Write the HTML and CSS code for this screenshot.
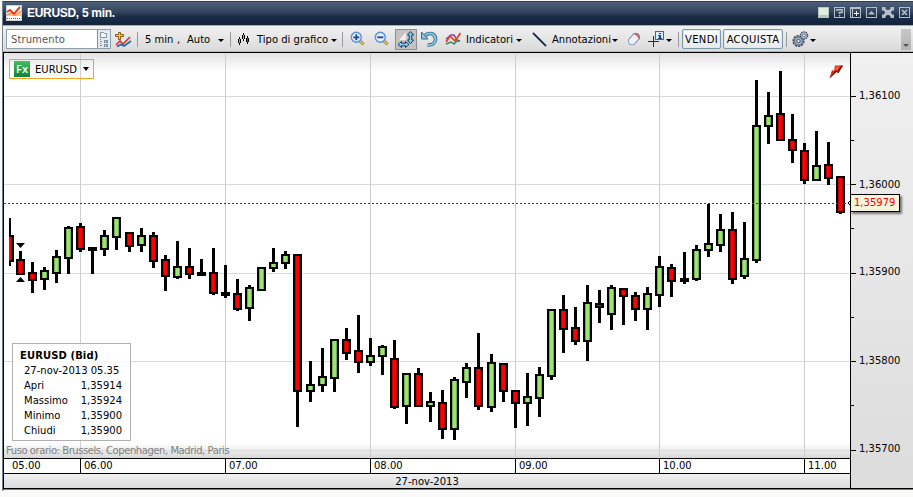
FILE: index.html
```
<!DOCTYPE html>
<html lang="it">
<head>
  <meta charset="utf-8">
  <title>EURUSD, 5 min.</title>
  <link rel="stylesheet" href="styles.css">
</head>
<body>
  <div class="window">
    <div class="titlebar">
      <svg class="logo" width="16" height="16" viewBox="0 0 16 16">
        <rect x="0.5" y="0.5" width="15" height="15" fill="#fff" stroke="#ccc"/>
        <path d="M1 9l4-2 4 3 6-5v6H1z" fill="#f5c29a"/>
        <path d="M1 7l3-2 4 4 6-7" fill="none" stroke="#e23b17" stroke-width="2"/>
        <path d="M1 10l4-2 4 3 6-5" fill="none" stroke="#f08a3c"/>
        <path d="M1 13.5h14" stroke="#555" stroke-dasharray="1 1"/>
      </svg>
      <span class="title">EURUSD, 5 min.</span>
      <div class="controls">
        <svg width="11" height="11"><rect width="11" height="11" fill="#b9c6c0"/><rect x="1" y="1" width="9" height="7" fill="#e3eedc"/></svg>
        <svg width="11" height="11" fill="none" stroke="#b5bfca"><rect x=".5" y=".5" width="10" height="10"/><path d="M3 4V2.800h5v2.700H5.500V7M5.500 8v1.500" stroke-width="1.500"/></svg>
        <svg width="11" height="11" fill="none" stroke="#b5bfca"><rect x=".5" y=".5" width="10" height="10"/><path d="M1 1.500h9M2.500 1v9"/><path d="M4 6.500h5M6.500 4v5" stroke="#fff"/></svg>
        <svg width="11" height="11" fill="none" stroke="#b5bfca"><rect x=".5" y=".5" width="10" height="10"/><path d="M2 7.500h7L5.500 4z" fill="#b5bfca" stroke="none"/></svg>
        <svg width="12" height="11" fill="#b5bfca"><path d="M0 0h4L3 1l2 2 2 0 2-2-1-1h4v4l-1-1-2 2v1l2 2 1-1v4H8l1-1-2-2H5l-2 2 1 1H0V7l1 1 2-2V5L1 3 0 4z"/></svg>
        <svg width="11" height="11" fill="none" stroke="#b5bfca"><rect x=".5" y=".5" width="10" height="10"/><path d="M3 3l5 5M8 3L3 8" stroke-width="1.700"/></svg>
      </div>
    </div>

    <div class="toolbar">
      <div class="search">
        <span class="search-text">Strumento</span>
        <svg class="search-btn" width="12" height="18">
          <path d="M2.500 2.500h3l1 1h2v4h-6z" fill="#f4f7f9" stroke="#7f93a3"/>
          <path d="M2.500 9v7M3 11.500h2M3 15.500h2" stroke="#7f93a3" stroke-dasharray="1 1" fill="none"/>
          <path d="M6 10h4v3H6zM6 14h4v3H6z" fill="#7f93a3"/>
          <path d="M7 11h1v1H7zM7 15h1v1H7z" fill="#fff"/>
        </svg>
      </div>
      <svg class="i-add" width="17" height="17">
        <path d="M1 14l4-4 3 3 7-7" fill="none" stroke="#d3352b" stroke-width="1.600"/>
        <path d="M2 15.500l4-2 3 1.500 7-5" fill="none" stroke="#2464b4" stroke-width="1.700"/>
        <path d="M3.500 1.500h2v2h3v2h-3v3h-2v-3h-3v-2h3z" fill="#f4c765" stroke="#8c5a14"/>
      </svg>
      <i class="sep s1"></i>
      <span class="label t-period">5 min</span>
      <span class="label t-comma">,</span>
      <span class="label t-auto">Auto</span>
      <i class="arrow"></i>
      <i class="sep s2"></i>
      <svg class="i-candles" width="12" height="13" shape-rendering="crispEdges">
        <path d="M1.500 4v8M5.500 0v8M9.500 3v8" stroke="#000"/>
        <path d="M0 6h3v4H0zM4 2h3v4H4zM8 5h3v4H8z"/>
        <path d="M1 6h1v4H1zM5 2h1v4H5z" fill="#3be03b"/><path d="M9 5h1v4H9z" fill="#f00"/>
      </svg>
      <span class="label t-type">Tipo di grafico</span>
      <i class="arrow"></i>
      <i class="sep s3"></i>
      <svg class="i-zoomin" width="16" height="16">
        <path d="M9.500 9.500l4 4" stroke="#8d6a25" stroke-width="3"/><path d="M10 10l3.500 3.500" stroke="#f1c96c" stroke-width="1.500"/>
        <circle cx="6.300" cy="6.300" r="5" fill="#e1eefc" stroke="#5a8fd8" stroke-width="1.400"/>
        <path d="M3.300 6.300h6M6.300 3.300v6" stroke="#1b4693" stroke-width="1.800"/>
      </svg>
      <svg class="i-zoomout" width="16" height="16">
        <path d="M9.500 9.500l4 4" stroke="#8d6a25" stroke-width="3"/><path d="M10 10l3.500 3.500" stroke="#f1c96c" stroke-width="1.500"/>
        <circle cx="6.300" cy="6.300" r="5" fill="#e1eefc" stroke="#5a8fd8" stroke-width="1.400"/>
        <path d="M3.300 6.300h6" stroke="#1b4693" stroke-width="1.800"/>
      </svg>
      <svg class="i-scale" width="22" height="21">
        <rect x=".5" y=".5" width="21" height="20" fill="#c3c3c3" stroke="#8e8e8e"/>
        <path d="M4 11L11 3v8z" fill="#eee"/>
        <path d="M15.500 2.500l3 3.500h-1.700v5h1.700l-3 3.500-3-3.500h1.700V6h-1.700z" fill="#8fd0f0" stroke="#12395e"/>
        <path d="M3 15.500l3.500-3v1.700h4v-1.700l3.500 3-3.500 3v-1.700h-4v1.700z" fill="#8fd0f0" stroke="#12395e"/>
      </svg>
      <svg class="i-undo" width="17" height="16">
        <path d="M4 4.500c5-4 10-1.500 10.500 3s-3.500 7-8 6.500" fill="none" stroke="#356e92" stroke-width="3.600"/>
        <path d="M4 4.500c5-4 10-1.500 10.500 3s-3.500 7-8 6.500" fill="none" stroke="#8fc6e2" stroke-width="1.800"/>
        <path d="M.5 1v7H7z" fill="#8fc6e2" stroke="#356e92"/>
      </svg>
      <svg class="i-ind" width="17" height="14" fill="none">
        <path d="M1 7l5-4h3l3 5 3 1" stroke="#7b46a8" stroke-width="1.500"/>
        <path d="M1 12l5-2 3 2 3-3 3 0" stroke="#2f8c5d" stroke-width="1.500"/>
        <path d="M1 10l4-6 5 5 5.500-8" stroke="#ee3a1b" stroke-width="1.700"/>
      </svg>
      <span class="label t-ind">Indicatori</span>
      <i class="arrow"></i>
      <svg class="i-line" width="15" height="15"><path d="M1 1l13 13" stroke="#8aa1c4" stroke-width="2.400"/><path d="M1 1l13 13" stroke="#0c1a38" stroke-width="1.400"/></svg>
      <span class="label t-ann">Annotazioni</span>
      <i class="arrow"></i>
      <svg class="i-eraser" width="14" height="14">
        <g transform="rotate(-48 7 7)">
          <rect x="0.500" y="3.300" width="13" height="7.400" rx="3.700" fill="#eef0f8" stroke="#8090b4"/>
          <path d="M11 3.800a3.700 3.700 0 0 1 0 6.400q1.200-3.200 0-6.400z" fill="#e79a92" stroke="#c05a52"/>
        </g>
      </svg>
      <svg class="i-info" width="17" height="16">
        <path d="M0 10.500h11M5.500 5v11" stroke="#1b2f55" shape-rendering="crispEdges"/>
        <rect x="7.500" y=".5" width="8" height="8" fill="#d8ebfa" stroke="#2470b0"/>
        <path d="M11 2h2v1h-2zM10 4h3v3h1v1h-4V7h1V5h-1z" fill="#154a86"/>
      </svg>
      <i class="arrow"></i>
      <i class="sep s4"></i>
      <button class="order sell">VENDI</button>
      <button class="order buy">ACQUISTA</button>
      <i class="sep s5"></i>
      <svg class="i-gear" width="17" height="17">
        <circle cx="6.500" cy="10" r="5.300" fill="#8f9eb2" stroke="#46546a" stroke-width="1.600" stroke-dasharray="2.200 1"/>
        <circle cx="6.500" cy="10" r="4" fill="#a9b7c8" stroke="#617087"/>
        <circle cx="6.500" cy="10" r="1.700" fill="#e8edf2" stroke="#3f4d63"/>
        <circle cx="12" cy="4.500" r="3.500" fill="#c0cbd8" stroke="#46546a" stroke-width="1.600" stroke-dasharray="1.500 .7"/>
        <circle cx="12" cy="4.500" r="1.400" fill="#f2f4f7" stroke="#4e5d72" stroke-width=".8"/>
      </svg>
      <i class="arrow"></i>
      <div class="overflow"><i class="arrow"></i></div>
    </div>

    <div class="chart">
      <div class="left">
        <div class="plot">
          <svg id="plot" width="846" height="405" viewBox="4 53 846 405"></svg>
          <div class="symbol"><b class="fx">Fx</b><span>EURUSD</span><i></i></div>
          <svg class="bolt" width="15" height="14"><path d="M6 .5h8L9.500 8 7.500 7 .5 13.500 3 5l2 1z" fill="#e02a10"/><path d="M14 .5L9.500 8 7.500 7 .5 13.500 4.500 8l2-2.500 2 1L12 .5z" fill="#7a1308"/><path d="M7 1.500h4L8 5.500 6 4.800z" fill="#ff5a2a"/></svg>
          <div class="legend">
            <b>EURUSD (Bid)</b>
            <div>27-nov-2013 05.35</div>
            <div><span>Apri</span><span>1,35914</span></div>
            <div><span>Massimo</span><span>1,35924</span></div>
            <div><span>Minimo</span><span>1,35900</span></div>
            <div><span>Chiudi</span><span>1,35900</span></div>
          </div>
          <div class="tz">Fuso orario: Brussels, Copenhagen, Madrid, Paris</div>
        </div>
        <div class="hours">
          <span>05.00</span><span>06.00</span><span>07.00</span><span>08.00</span><span>09.00</span><span>10.00</span><span>11.00</span>
        </div>
        <div class="date">27-nov-2013</div>
      </div>
      <div class="axis">
        <svg id="axis" width="62" height="435" viewBox="851 53 62 435"></svg>
        <div class="price">1,35979</div>
      </div>
    </div>
  </div>
  <script src="chart.js"></script>
</body>
</html>
```
FILE: styles.css
```
body {
  margin: 0;
  background: #f9faf8;
  font-family: "DejaVu Sans", Verdana, sans-serif;
  font-size: 10px;
  color: #000;
  overflow: hidden;
}

svg {
  display: block;
  flex: none;
}

.window {
  box-sizing: border-box;
  width: 911px;
  height: 490px;
  margin: 1px 0 0 2px;
  border-left: 1px solid #70808f;
}

/* title bar */
.titlebar {
  box-sizing: border-box;
  display: flex;
  align-items: center;
  height: 24px;
  padding: 0 4px 0 4px;
  border-top: 1px solid #2c3d57;
  border-bottom: 1px solid #16253a;
  background: linear-gradient(#4f607a, #33445f 45%, #1c2d48 65%, #13243c);
}

.logo {
  margin-left: -1px;
}

.title {
  margin-left: 5px;
  font: bold 12px "Liberation Sans", Arial, sans-serif;
  letter-spacing: -.3px;
  color: #fff;
}

.controls {
  display: flex;
  gap: 5px;
  margin: -1px -1px 0 auto;
}

/* toolbar */
.toolbar {
  box-sizing: border-box;
  display: flex;
  align-items: center;
  height: 27px;
  padding: 1px 2px 0 3px;
  border-top: 1px solid #a9adb3;
  border-bottom: 1px solid #b5b5b5;
  background: linear-gradient(#f1f1f1, #dadada);
}

.toolbar > * {
  flex: none;
}

.search {
  box-sizing: border-box;
  display: flex;
  width: 105px;
  height: 20px;
  border: 1px solid #8fa0ad;
  background: #fff;
}

.search-text {
  width: 90px;
  padding-left: 4px;
  box-sizing: border-box;
  line-height: 20px;
  letter-spacing: .1px;
  color: #555;
}

.search-btn {
  background: #e3eaf0;
  border-left: 1px solid #7795a8;
}

.label {
  margin-top: 1px;
  white-space: nowrap;
  line-height: 14px;
}

.sep {
  width: 1px;
  height: 15px;
  background: #9a9a9a;
}

.arrow {
  width: 0;
  height: 0;
  margin-top: 3px;
  border: 3px solid transparent;
  border-top-color: #000;
  border-bottom: 0;
}

.i-add { margin-left: 4px; }
.s1 { margin-left: 5px; }
.t-period { width: 32px; margin-left: 7px; }
.t-comma { width: 10px; }
.t-auto { width: 31px; }
.s2 { margin-left: 6px; }
.i-candles { margin-left: 7px; }
.t-type { width: 74px; margin-left: 7px; }
.s3 { margin-left: 5px; }
.i-zoomin { margin-left: 7px; }
.i-zoomout { margin-left: 8px; }
.i-scale { margin-left: 5px; }
.i-undo { margin-left: 4px; }
.i-ind { margin-left: 7px; }
.t-ind { width: 50px; margin-left: 4px; }
.i-line { margin-left: 10px; }
.t-ann { width: 60px; margin-left: 5px; }
.i-eraser { margin-left: 9px; }
.i-info { margin-left: 7px; }
.s4 { margin-left: 6px; }
.s5 { margin-left: 3px; }
.i-gear { margin-left: 5px; }

.i-info + .arrow,
.i-gear + .arrow {
  margin-left: 1px;
}

.order {
  box-sizing: border-box;
  height: 20px;
  padding: 1px 0 0;
  border: 1px solid #7c98ab;
  border-radius: 2px;
  background: linear-gradient(#fff, #e6e9ec);
  box-shadow: inset 0 0 0 1px #dfe9f0;
  font: 10px "DejaVu Sans", Verdana, sans-serif;
  letter-spacing: .3px;
  color: #000;
}

.sell { width: 39px; margin-left: 3px; }
.buy { width: 60px; margin-left: 2px; }

.overflow {
  display: flex;
  justify-content: center;
  align-items: center;
  width: 10px;
  height: 21px;
  margin-left: auto;
  background: linear-gradient(#c8c8c8, #b2b2b2);
}

.overflow .arrow {
  margin-top: 12px;
  border-top-color: #555;
}

/* chart */
.chart {
  display: flex;
  box-sizing: border-box;
  height: 438px;
  border-top: 1px solid #000;
  border-left: 1px solid #000;
  border-bottom: 1px solid #70808f;
}

.left {
  width: 846px;
  border-right: 1px solid #000;
}

.plot {
  position: relative;
  height: 405px;
  background: linear-gradient(#e2e2e2, #fff 18px, #fff 390px, #d8d8d8);
}

.symbol {
  position: absolute;
  left: 5px;
  top: 6px;
  box-sizing: border-box;
  display: flex;
  align-items: center;
  width: 85px;
  height: 20px;
  padding-left: 4px;
  border: 1px solid #f5a31c;
}

.fx {
  width: 16px;
  height: 16px;
  margin-right: 5px;
  background: linear-gradient(#3fbf63, #118336);
  font: 600 11px/16px "Open Sans", sans-serif;
  text-align: center;
  color: #fff;
}

.symbol i {
  margin-left: 6px;
  border: 3px solid transparent;
  border-top: 4px solid #000;
  border-bottom: 0;
}

.bolt {
  position: absolute;
  left: 825px;
  top: 12px;
}

.legend {
  position: absolute;
  left: 8px;
  top: 290px;
  box-sizing: border-box;
  width: 119px;
  height: 98px;
  padding: 4px 8px 0 7px;
  border: 1px solid #b0b0b0;
  background: rgba(255, 255, 255, .8);
  line-height: 15px;
  white-space: nowrap;
}

.legend div {
  display: flex;
  justify-content: space-between;
  padding-left: 4px;
}

.legend b {
  display: block;
  letter-spacing: .1px;
}

.tz {
  position: absolute;
  left: 2px;
  top: 391px;
  line-height: 14px;
  letter-spacing: -.44px;
  color: #808080;
  white-space: nowrap;
}

.hours {
  display: grid;
  grid-template-columns: 77px 145px 145px 145px 144px 145px 45px;
  height: 14px;
  border-top: 1px solid #000;
  border-bottom: 1px solid #000;
  background: #fff;
  line-height: 14px;
}

.hours span {
  padding-left: 3px;
  border-right: 1px solid #000;
}

.hours span:first-child {
  padding-left: 8px;
}

.hours span:last-child {
  border-right: 0;
}

.date {
  height: 14px;
  border-bottom: 1px solid #000;
  background: linear-gradient(#f0f0f0, #dcdcdc);
  line-height: 15px;
  text-align: center;
}

.axis {
  position: relative;
  flex: 1;
  height: 435px;
  border-bottom: 1px solid #000;
  background: linear-gradient(#f0f0f0, #dcdcdc);
}

.price {
  position: absolute;
  left: -1px;
  top: 141px;
  box-sizing: border-box;
  width: 50px;
  height: 18px;
  padding-left: 3px;
  border: 1px solid #000;
  background: #f5f5dc;
  box-shadow: 2px 2px 2px #777;
  line-height: 16px;
  color: #f00;
}
```
FILE: chart.js
```
// x, high, body top, body bottom, low, direction (u = up, d = down, n = flat)
var candles = [
  [9,218,235,262,266,'d'], [20,251,259,275,275,'d'], [32,262,272,281,293,'d'], [44,267,270,280,290,'u'],
  [56,250,256,274,283,'u'], [68,226,227,259,274,'u'], [80,223,226,250,252,'d'], [92,247,247,251,274,'n'],
  [104,230,235,250,256,'u'], [116,217,217,238,250,'u'], [129,232,232,247,252,'d'], [141,228,235,246,252,'u'],
  [153,232,235,262,268,'d'], [165,255,259,277,291,'d'], [177,241,266,278,279,'u'], [189,248,266,275,279,'d'],
  [201,259,272,276,276,'n'], [213,248,272,294,295,'d'], [225,265,292,296,298,'n'], [237,279,293,310,311,'d'],
  [249,285,287,309,321,'u'], [261,267,267,291,291,'u'], [273,248,262,269,272,'u'], [285,251,254,264,269,'u'],
  [297,254,254,392,427,'d'], [310,361,384,392,402,'u'], [322,348,376,386,392,'u'], [334,339,339,379,392,'u'],
  [346,328,339,354,360,'d'], [358,315,350,363,373,'d'], [370,338,355,363,366,'u'], [382,345,346,357,375,'u'],
  [394,340,358,408,409,'d'], [406,373,373,407,424,'u'], [418,368,373,407,407,'d'], [430,392,401,407,422,'u'],
  [442,390,402,430,439,'d'], [454,377,379,430,440,'u'], [466,363,367,383,398,'u'], [478,333,367,407,410,'d'],
  [491,354,362,408,412,'u'], [503,363,363,392,402,'d'], [515,390,390,404,428,'d'], [527,373,396,404,426,'u'],
  [539,367,374,399,417,'u'], [551,309,309,377,380,'u'], [563,295,309,330,353,'d'], [575,307,327,342,345,'d'],
  [587,285,302,342,361,'u'], [599,290,303,308,323,'d'], [611,285,287,315,330,'u'], [623,288,288,297,325,'d'],
  [635,292,295,310,321,'d'], [647,287,293,310,330,'u'], [659,256,266,296,307,'u'], [671,264,267,282,297,'d'],
  [684,252,278,282,284,'n'], [696,245,249,280,281,'u'], [708,204,243,251,257,'u'], [720,214,229,246,252,'u'],
  [732,212,229,280,284,'d'], [744,222,258,277,279,'u'], [756,80,125,261,263,'u'], [768,92,115,127,144,'u'],
  [780,71,113,141,141,'d'], [792,114,139,151,163,'d'], [804,143,150,181,184,'d'], [816,131,165,181,181,'u'],
  [828,142,164,179,185,'d'], [840,176,176,213,214,'d']
];
var colors = { u: '#98e66e', d: '#ff0000' };
var out = '';

function rect(x, y, w, h, fill) {
  return '<rect x="' + x + '" y="' + y + '" width="' + w + '" height="' + h + '" fill="' + fill + '"/>';
}

// grid
[96, 184, 273, 361, 450].forEach(function (y) { out += rect(4, y, 846, 1, '#dadada'); });
[80, 225, 370, 515, 659, 804].forEach(function (x) { out += rect(x, 53, 1, 405, '#cecece'); });

out += '<clipPath id="area"><rect x="9" y="53" width="841" height="405"/></clipPath><g clip-path="url(#area)">';
candles.forEach(function (c) {
  out += rect(c[0] - 1, c[1], 3, c[4] - c[1], '#000');
  out += rect(c[0] - 4, c[2], 9, c[3] - c[2], '#000');
  if (c[5] !== 'n') {
    out += rect(c[0] - 1.75, c[2] + 2, 4.5, c[3] - c[2] - 4, colors[c[5]]);
  }
});
out += '</g>';

// current price line and selected candle markers
out += '<path d="M4 203.5H850" stroke="#d00000" stroke-dasharray="2 2"/>';
out += '<path d="M16 243h9l-4.500 5zM16 282h9l-4.500-5z"/>';
out += '<path d="M851 200v6l-3-3z" fill="#f5f5dc" stroke="#000"/>';
document.getElementById('plot').innerHTML = out;

// price axis: tick y, label baseline
var axis = '';
var labels = [[96, 99, '1,36100'], [184, 188, '1,36000'], [273, 275, '1,35900'], [361, 364, '1,35800'], [450, 452, '1,35700']];
labels.forEach(function (l) {
  axis += rect(851, l[0], 5, 1, '#000') + '<text x="859" y="' + l[1] + '">' + l[2] + '</text>';
});
[140, 228, 317, 405].forEach(function (y) { axis += rect(851, y, 3, 1, '#000'); });
document.getElementById('axis').innerHTML = axis;
```
